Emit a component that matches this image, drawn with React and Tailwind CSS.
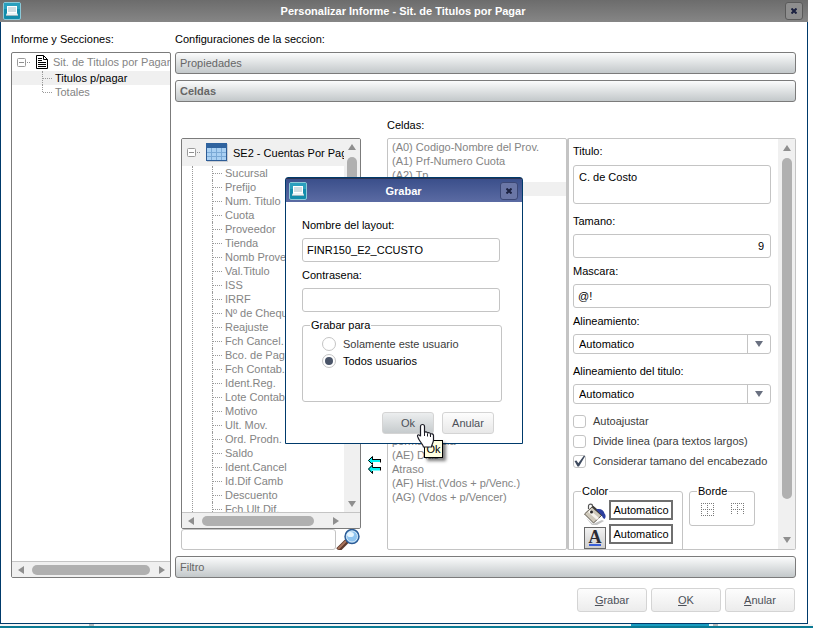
import { useState } from 'react';

const FIELDS = [
  'Sucursal',
  'Prefijo',
  'Num. Titulo',
  'Cuota',
  'Proveedor',
  'Tienda',
  'Nomb Proveed',
  'Val.Titulo',
  'ISS',
  'IRRF',
  'Nº de Cheque',
  'Reajuste',
  'Fch Cancel.',
  'Bco. de Pago',
  'Fch Contab.',
  'Ident.Reg.',
  'Lote Contable',
  'Motivo',
  'Ult. Mov.',
  'Ord. Prodn.',
  'Saldo',
  'Ident.Cancel',
  'Id.Dif Camb',
  'Descuento',
  'Fch.Ult.Dif.',
];

const FIRST_CELLS = ['(A0) Codigo-Nombre del Prov.', '(A1) Prf-Numero Cuota', '(A2) Tp'];
const LAST_CELLS = ['permanencia', '(AE) Dias', 'Atraso', '(AF) Hist.(Vdos + p/Venc.)', '(AG) (Vdos + p/Vencer)'];

function AppIcon() {
  return (
    <svg width="18" height="18" viewBox="0 0 18 18" className="shrink-0">
      <rect x="0.5" y="0.5" width="17" height="17" rx="1.5" fill="#128cab" stroke="#8cc9d8" />
      <rect x="1" y="1" width="16" height="6" fill="#2a9fbd" />
      <rect x="4.5" y="4.5" width="9" height="6" fill="#cfdde2" stroke="#fff" />
      <path d="M4 11h10l1 2v1H3v-1z" fill="#eaf4f6" />
      <path d="M3 13.5h12" stroke="#9cb8c0" />
    </svg>
  );
}

function TitleBar({ title, className, closeClass }) {
  return (
    <header className={`flex shrink-0 items-center pl-[3px] text-white ${className}`}>
      <AppIcon />
      <h1 className="flex-1 text-center font-bold">{title}</h1>
      <button
        aria-label="Cerrar"
        className={`flex h-[18px] w-[18px] items-center justify-center rounded-[3px] border ${closeClass}`}
      >
        <svg width="6" height="6" viewBox="0 0 6 6">
          <path d="M0.5 0.5L5.5 5.5M5.5 0.5L0.5 5.5" stroke="#1b2140" strokeWidth="2" />
        </svg>
      </button>
    </header>
  );
}

function Accordion({ children, bold }) {
  return (
    <button
      className={`h-[22px] w-full shrink-0 rounded-[3px] border border-[#7b7b7b] bg-linear-to-b from-[#fbfcfc] to-[#c3c8ca] px-1 text-left text-[#666] ${
        bold ? 'font-bold' : ''
      }`}
    >
      {children}
    </button>
  );
}

function Arrow({ dir }) {
  const d = {
    up: 'M4 1L8 7H0z',
    down: 'M0 1H8L4 7z',
    left: 'M1 4L7 0V8z',
    right: 'M7 4L1 0V8z',
  }[dir];
  return (
    <svg width="8" height="8" viewBox="0 0 8 8" className="shrink-0">
      <path d={d} fill="#8f8f8f" />
    </svg>
  );
}

function HScroll({ className, thumbClass }) {
  return (
    <div className={`flex h-4 shrink-0 items-center border-t border-[#c4c4c4] bg-[#f0f0f0] pl-[5px] ${className}`}>
      <Arrow dir="left" />
      <div className={`ml-[7px] h-[10px] flex-1 rounded-full bg-[#b0b0b0] ${thumbClass}`} />
      <Arrow dir="right" />
    </div>
  );
}

function TreeBox() {
  return (
    <svg width="14" height="9" viewBox="0 0 14 9" className="shrink-0">
      <rect x="0.5" y="0.5" width="8" height="8" rx="1" fill="#fff" stroke="#9a9a9a" />
      <path d="M2 4.5h5" stroke="#8f8f8f" />
      <path d="M10 4.5h4" stroke="#8f8f8f" strokeDasharray="1 1" />
    </svg>
  );
}

function Branch({ children, last, className }) {
  return (
    <li className={`flex h-[14px] items-center ${className}`}>
      <span className={`w-px border-l border-dotted border-[#9a9a9a] ${last ? 'h-[7px] self-start' : 'h-full'}`} />
      <span className="mr-[3px] w-[9px] shrink-0 border-t border-dotted border-[#9a9a9a]" />
      <span className="whitespace-nowrap">{children}</span>
    </li>
  );
}

function SectionTree() {
  return (
    <div className="flex min-h-0 flex-1 flex-col overflow-hidden rounded-[2px] border border-[#7b7b7b] text-[#848484]">
      <div className="flex h-[18px] shrink-0 items-center pl-[5px]">
        <TreeBox />
        <svg width="12" height="14" viewBox="0 0 12 14" className="mr-[5px] ml-[5px] shrink-0">
          <path d="M0.5 0.5h7l4 4v9h-11z" fill="#fff" stroke="#000" />
          <path d="M7.5 0.5v4h4" fill="none" stroke="#000" />
          <path d="M2 3.5h4M2 5.5h4M2 7.5h8M2 9.5h8M2 11.5h8" stroke="#000" />
        </svg>
        <span className="whitespace-nowrap">Sit. de Titulos por Pagar</span>
      </div>
      <ul className="flex-1">
        <Branch className="bg-[#f0f0f0] pl-[30px] text-black">Titulos p/pagar</Branch>
        <Branch last className="pl-[30px]">Totales</Branch>
      </ul>
      <HScroll className="pr-1" thumbClass="mr-[8px]" />
    </div>
  );
}

function FieldTree() {
  return (
    <div className="flex min-h-0 flex-1 flex-col overflow-hidden rounded-[2px] border border-[#7b7b7b]">
      <div className="flex min-h-0 flex-1">
        <div className="min-w-0 flex-1 overflow-hidden">
          <div className="flex h-[27px] items-center bg-[#f0f0f0] pl-[5px]">
            <TreeBox />
            <svg width="22" height="19" viewBox="0 0 22 19" className="mr-[5px] ml-[5px] shrink-0">
              <rect x="1" y="1" width="21" height="18" fill="#c9cdd2" />
              <rect x="0.5" y="0.5" width="20" height="17" fill="#a9d0f3" stroke="#2d5c96" />
              <rect x="0" y="0" width="21" height="5" fill="#2f639f" />
              <path d="M1 9.5h19M1 13.5h19M5.5 5v12M10.5 5v12M15.5 5v12" stroke="#7aa9d6" />
            </svg>
            <span className="whitespace-nowrap">SE2 - Cuentas Por Pag</span>
          </div>
          <ul className="ml-[10px] border-l border-dotted border-[#9a9a9a] text-[#848484]">
            {FIELDS.map((f) => (
              <Branch key={f} className="pl-[19px]">{f}</Branch>
            ))}
          </ul>
        </div>
        <div className="flex w-4 shrink-0 flex-col items-center bg-[#f0f0f0] pt-1 pb-1">
          <Arrow dir="up" />
          <div className="mt-[6px] h-[180px] w-[10px] rounded-full bg-[#b0b0b0]" />
          <div className="flex-1" />
          <Arrow dir="down" />
        </div>
      </div>
      <HScroll className="pr-5" thumbClass="mr-[18px]" />
    </div>
  );
}

function SearchRow() {
  return (
    <div className="flex h-[21px] shrink-0">
      <input
        aria-label="Buscar"
        className="h-[21px] min-w-0 flex-1 rounded-[3px] border border-[#c4c4c4] px-1 outline-none"
      />
      <button aria-label="Buscar campo" className="w-[25px]">
        <svg width="25" height="21" viewBox="0 0 25 21">
          <path d="M2 21L11 12" stroke="#5d3a2e" strokeWidth="5" />
          <path d="M2 20L10 12" stroke="#a9745c" strokeWidth="2" />
          <circle cx="16" cy="7.5" r="7" fill="#6fa9dc" stroke="#2b5a94" strokeWidth="1.4" />
          <circle cx="16" cy="7.5" r="5.5" fill="#8fc4f0" stroke="#d7e9f7" />
          <ellipse cx="14.5" cy="5.5" rx="3.4" ry="2.6" fill="#e6f5ff" />
        </svg>
      </button>
    </div>
  );
}

function MoveArrows() {
  return (
    <div className="flex flex-col items-center justify-end pb-[75px]">
      <button aria-label="Quitar celdas">
        <svg width="13" height="19" viewBox="0 0 13 19">
          <path d="M0 4.5L4 0.5V3h8v3H4v2.500z M0 13L4 9v2.500h8v3H4V17z" fill="#00f4f4" />
          <path d="M0.500 4.500L4.500 0.500V3M4 3.500H12.500M12.500 3V6.500M0.500 4.500L4.500 8.500V6.500M0.500 13L4.500 9V11.500H12.500M12.500 11V14.500M0.500 13L4.500 17.500V15" fill="none" stroke="#000" />
        </svg>
      </button>
    </div>
  );
}

function CellList() {
  return (
    <ul className="min-h-0 overflow-hidden rounded-[2px] border border-[#c4c4c4] pt-px text-[#848484]">
      {FIRST_CELLS.map((c) => (
        <li key={c} className="h-[14px] pl-1">{c}</li>
      ))}
      <li className="h-[14px] bg-[#f0f0f0]" />
      <li className="h-[238px]" />
      {LAST_CELLS.map((c) => (
        <li key={c} className="h-[14px] pl-1">{c}</li>
      ))}
    </ul>
  );
}

function Field({ id, label, children }) {
  return (
    <div className="flex h-[50px] flex-col">
      <label htmlFor={id} className="mb-[5px] h-4 leading-4">{label}</label>
      {children}
    </div>
  );
}

const inputClass = 'h-6 w-full rounded-[3px] border border-[#c4c4c4] bg-white px-1 outline-none';

function Dropdown({ id }) {
  return (
    <div className="flex h-5 rounded-[3px] border border-[#c4c4c4]">
      <select id={id} className="min-w-0 flex-1 appearance-none pl-[5px] outline-none">
        <option>Automatico</option>
      </select>
      <span className="pointer-events-none flex w-[23px] items-center justify-center border-l border-[#c4c4c4]">
        <svg width="8" height="6" viewBox="0 0 8 6">
          <path d="M0 0H8L4 6z" fill="#697080" />
        </svg>
      </span>
    </div>
  );
}

function Check({ label, defaultChecked }) {
  return (
    <label className="flex h-4 items-center gap-[7px] text-[#3c3c3c]">
      <span className="grid h-[13px] w-[13px] shrink-0">
        <input
          type="checkbox"
          defaultChecked={defaultChecked}
          className="peer col-start-1 row-start-1 h-[13px] w-[13px] appearance-none rounded-[3px] border border-[#c4c4c4] bg-white"
        />
        <svg
          viewBox="0 0 13 13"
          className="pointer-events-none invisible col-start-1 row-start-1 h-[13px] w-[13px] overflow-visible peer-checked:visible"
        >
          <path d="M1.5 6l2-0.5 1.8 2.8L11 0.5l1.2 0.4L6 11.5H4.5z" fill="#3e4a5e" />
        </svg>
      </span>
      {label}
    </label>
  );
}

function ColorBox() {
  return (
    <button type="button" className="h-5 w-16 border-2 border-[#6f6f6f] bg-white text-center">
      Automatico
    </button>
  );
}

function Properties() {
  return (
    <div className="flex min-h-0 overflow-hidden rounded-[2px] border border-l-2 border-[#c4c4c4]">
      <form className="min-w-0 flex-1 overflow-hidden pt-1 pr-[7px] pl-1">
        <div className="flex h-[70px] flex-col">
          <label htmlFor="titulo" className="mb-[6px] h-4 leading-4">Titulo:</label>
          <textarea
            id="titulo"
            defaultValue="C. de Costo"
            className="h-[39px] w-full resize-none rounded-[3px] border border-[#c4c4c4] px-[5px] py-1 outline-none"
          />
        </div>
        <Field id="tamano" label="Tamano:">
          <input id="tamano" defaultValue="9" className={`${inputClass} pr-[6px] text-right`} />
        </Field>
        <Field id="mascara" label="Mascara:">
          <input id="mascara" defaultValue="@!" className={inputClass} />
        </Field>
        <Field id="alin" label="Alineamiento:">
          <Dropdown id="alin" />
        </Field>
        <Field id="alin-titulo" label="Alineamiento del titulo:">
          <Dropdown id="alin-titulo" />
        </Field>
        <div className="flex flex-col gap-1">
          <Check label="Autoajustar" />
          <Check label="Divide linea (para textos largos)" />
          <Check label="Considerar tamano del encabezado" defaultChecked />
        </div>
        <div className="mt-[14px] flex items-start gap-[6px]">
          <fieldset className="h-[90px] w-[110px] rounded-[3px] border border-[#c4c4c4] pl-[7px]">
            <legend className="h-4 px-px leading-4">Color</legend>
            <div className="flex flex-col gap-1 pt-px pl-[3px]">
              <div className="flex h-5 gap-[3px]">
                <svg width="22" height="24" viewBox="0 0 22 24" className="shrink-0 overflow-visible">
                  <path d="M2 18l7 6 9-4 2 1-7 4H8z" fill="#c4c4c4" />
                  <path d="M4.500 9V6c0-2.500 4-2.500 4 0v6" fill="none" stroke="#555" strokeWidth="1.200" />
                  <path d="M8.500 6.500L18 15l-8.500 8L0.500 14z" fill="#cfc9bb" stroke="#5b554b" />
                  <path d="M5 11l9 8" stroke="#f7f4ee" strokeWidth="3" />
                  <path d="M8.500 6.500L18 15" stroke="#3c3a38" strokeWidth="2.200" />
                  <circle cx="7.500" cy="12" r="1.500" fill="#2b2b2b" />
                  <path d="M12 9.500c4-1.500 8 .5 8.500 4 1.500 1.500 1.500 4 0 5.500-2-.5-2-3-3.500-4.500z" fill="#2c3f9e" />
                </svg>
                <ColorBox />
              </div>
              <div className="flex h-5 gap-[3px]">
                <button
                  type="button"
                  aria-label="Color de fuente"
                  className="mt-[3px] flex h-[22px] w-[22px] shrink-0 flex-col items-center border border-[#6a6a6a] bg-linear-to-b from-[#f2f2f2] to-[#cfcfcf]"
                >
                  <span className="h-4 font-['Liberation_Serif',serif] text-[18px] leading-[18px] font-bold text-[#2b2b33]">A</span>
                  <span className="h-0.5 w-3 bg-[#3a5fd8]" />
                </button>
                <ColorBox />
              </div>
            </div>
          </fieldset>
          <fieldset className="h-[43px] w-[66px] rounded-[3px] border border-[#c4c4c4] pl-[7px]">
            <legend className="h-4 px-px leading-4">Borde</legend>
            <div className="flex gap-[17px] pt-1 pl-1">
              <svg width="13" height="13" viewBox="0 0 13 13">
                <path d="M0 .5h13M0 6.500h13M0 12.500h13M.5 0v13M6.500 0v13M12.500 0v13" stroke="#7a7a7a" strokeDasharray="1 1" />
              </svg>
              <svg width="13" height="13" viewBox="0 0 13 13">
                <path d="M0 .5h13M0 6.500h13M.5 0v11M6.500 0v11M12.500 0v11" stroke="#7a7a7a" strokeDasharray="1 1" />
              </svg>
            </div>
          </fieldset>
        </div>
      </form>
      <div className="flex w-[17px] shrink-0 flex-col items-center bg-[#f0f0f0] py-[5px]">
        <Arrow dir="up" />
        <div className="mt-[6px] mb-[37px] w-[10px] flex-1 rounded-full bg-[#b0b0b0]" />
        <Arrow dir="down" />
      </div>
    </div>
  );
}

function FooterButton({ hot, rest }) {
  return (
    <button className="h-6 w-[70px] rounded-[3px] border border-[#d4d4d4] bg-linear-to-b from-[#fdfdfd] to-[#ececec] text-[#4c5058]">
      <span className="underline">{hot}</span>
      {rest}
    </button>
  );
}

function Radio({ label, value, current, onChange }) {
  const on = current === value;
  return (
    <label className={`flex h-[17px] items-center gap-[7px] ${on ? 'text-black' : 'text-[#3c3c3c]'}`}>
      <input
        type="radio"
        name="grabar-para"
        checked={on}
        onChange={() => onChange(value)}
        className="h-[14px] w-[14px] appearance-none rounded-full border border-[#c4c4c4] bg-white bg-clip-content p-[2px] checked:bg-[#4a5468]"
      />
      {label}
    </label>
  );
}

function HandCursor() {
  return (
    <svg width="19" height="26" viewBox="0 0 19 26" className="absolute top-[11px] left-[34px] z-10">
      <path
        d="M6.500 1.500c1.200 0 2 .8 2 2v6c.4-.9 3-.9 3 .8.500-1 3-.8 3 .9.600-.8 3-.5 3 1.300v4.500c0 3-2 4.500-2 7H7.500c0-2-3-4.500-4.500-7.500C2 14.500 1 13 1.500 12.300c.8-1 2.300-.3 3 1V3.500c0-1.200.8-2 2-2z"
        fill="#fff"
        stroke="#1d1d26"
        strokeWidth="1.200"
      />
      <path d="M8.500 9v4M11.500 10.500v3M14.500 11.500v2.500" stroke="#1d1d26" />
    </svg>
  );
}

const dialogButton = 'h-[22px] w-[52px] rounded-[3px] border border-[#d4d4d4] bg-linear-to-b text-[#4c5058]';

function SaveDialog() {
  const [target, setTarget] = useState('todos');

  return (
    <section
      role="dialog"
      aria-label="Grabar"
      className="absolute top-[177px] left-1/2 flex w-[238px] -translate-x-1/2 flex-col rounded-t-[3px] border border-[#003a6b] bg-white"
    >
      <TitleBar
        title="Grabar"
        className="h-6 border-t border-[#2b3350] bg-linear-to-b from-[#3b4f8b] to-[#5b6ba3] pr-1"
        closeClass="border-[#3b4775] bg-[#6a76a6]"
      />
      <div className="px-4 pt-[10px] pb-[9px]">
        <div className="w-[198px] pt-[5px]">
          <Field id="layout" label="Nombre del layout:">
            <input id="layout" defaultValue="FINR150_E2_CCUSTO" className={inputClass} />
          </Field>
          <Field id="clave" label="Contrasena:">
            <input id="clave" type="password" className={inputClass} />
          </Field>
        </div>
        <fieldset className="h-[85px] w-[200px] rounded-[3px] border border-[#c4c4c4] pl-[7px]">
          <legend className="h-4 px-px leading-4">Grabar para</legend>
          <div className="pt-[2px] pl-3">
            <Radio label="Solamente este usuario" value="usuario" current={target} onChange={setTarget} />
            <Radio label="Todos usuarios" value="todos" current={target} onChange={setTarget} />
          </div>
        </fieldset>
        <div className="mt-[10px] flex justify-end gap-2 pr-3">
          <div className="relative">
            <button className={`${dialogButton} from-[#eceeef] to-[#c6cbcd]`}>Ok</button>
            <HandCursor />
            <span
              role="tooltip"
              className="absolute top-7 left-[42px] h-[18px] w-[19px] border border-black bg-[#ffffe1] text-center leading-4 shadow-[3px_3px_3px_rgba(0,0,0,0.5)]"
            >
              Ok
            </span>
          </div>
          <button className={`${dialogButton} from-[#fdfdfd] to-[#e8e8e8]`}>Anular</button>
        </div>
      </div>
    </section>
  );
}

export default function App() {
  return (
    <div className="flex h-screen flex-col overflow-hidden bg-white font-['Liberation_Sans',Arial,sans-serif] text-[11px] leading-[14px] text-black">
      <main className="relative mr-[5px] flex min-h-0 flex-1 flex-col">
        <TitleBar
          title="Personalizar Informe - Sit. de Titulos por Pagar"
          className="h-[22px] bg-linear-to-b from-[#6c6c6c] to-[#868686] pr-[5px]"
          closeClass="border-[#5a5a5a] bg-[#8e8e8e]"
        />
        <div className="flex min-h-0 flex-1 flex-col border border-t-0 border-[#003a6b] pr-[11px] pb-[11px] pl-[10px]">
          <div className="flex min-h-0 flex-1 gap-1 pt-[9px]">
            <aside className="flex w-40 shrink-0 flex-col">
              <h2 className="mb-[5px] h-4 leading-4">Informe y Secciones:</h2>
              <SectionTree />
            </aside>
            <section className="flex min-w-0 flex-1 flex-col">
              <h2 className="mb-[5px] h-4 leading-4">Configuraciones de la seccion:</h2>
              <Accordion>Propiedades</Accordion>
              <div className="mt-[6px] flex min-h-0 flex-1 flex-col">
                <Accordion bold>Celdas</Accordion>
                <div className="grid min-h-0 flex-1 grid-cols-[180fr_26px_180fr_229fr] grid-rows-[36px_minmax(0,1fr)] pb-[6px] pl-[6px]">
                  <h3 className="col-start-3 self-end pb-[6px]">Celdas:</h3>
                  <div className="col-start-1 flex min-h-0 min-w-0 flex-col">
                    <FieldTree />
                    <SearchRow />
                  </div>
                  <MoveArrows />
                  <CellList />
                  <Properties />
                </div>
                <Accordion>Filtro</Accordion>
              </div>
            </section>
          </div>
          <footer className="flex justify-end gap-1 pt-[10px] pr-px">
            <FooterButton hot="G" rest="rabar" />
            <FooterButton hot="O" rest="K" />
            <FooterButton hot="A" rest="nular" />
          </footer>
        </div>
        <SaveDialog />
      </main>
      <div className="flex h-0.5 shrink-0 bg-[#f4f4f4]">
        <span className="ml-[89px] w-[5px] bg-[#b8b8b8]" />
        <span className="ml-auto w-[78px] bg-[#1a9cc0]" />
        <span className="mr-[95px] ml-1 w-[5px] bg-[#b8b8b8]" />
      </div>
      <div className="h-0.5 shrink-0 bg-[#0b7a94]" />
    </div>
  );
}
